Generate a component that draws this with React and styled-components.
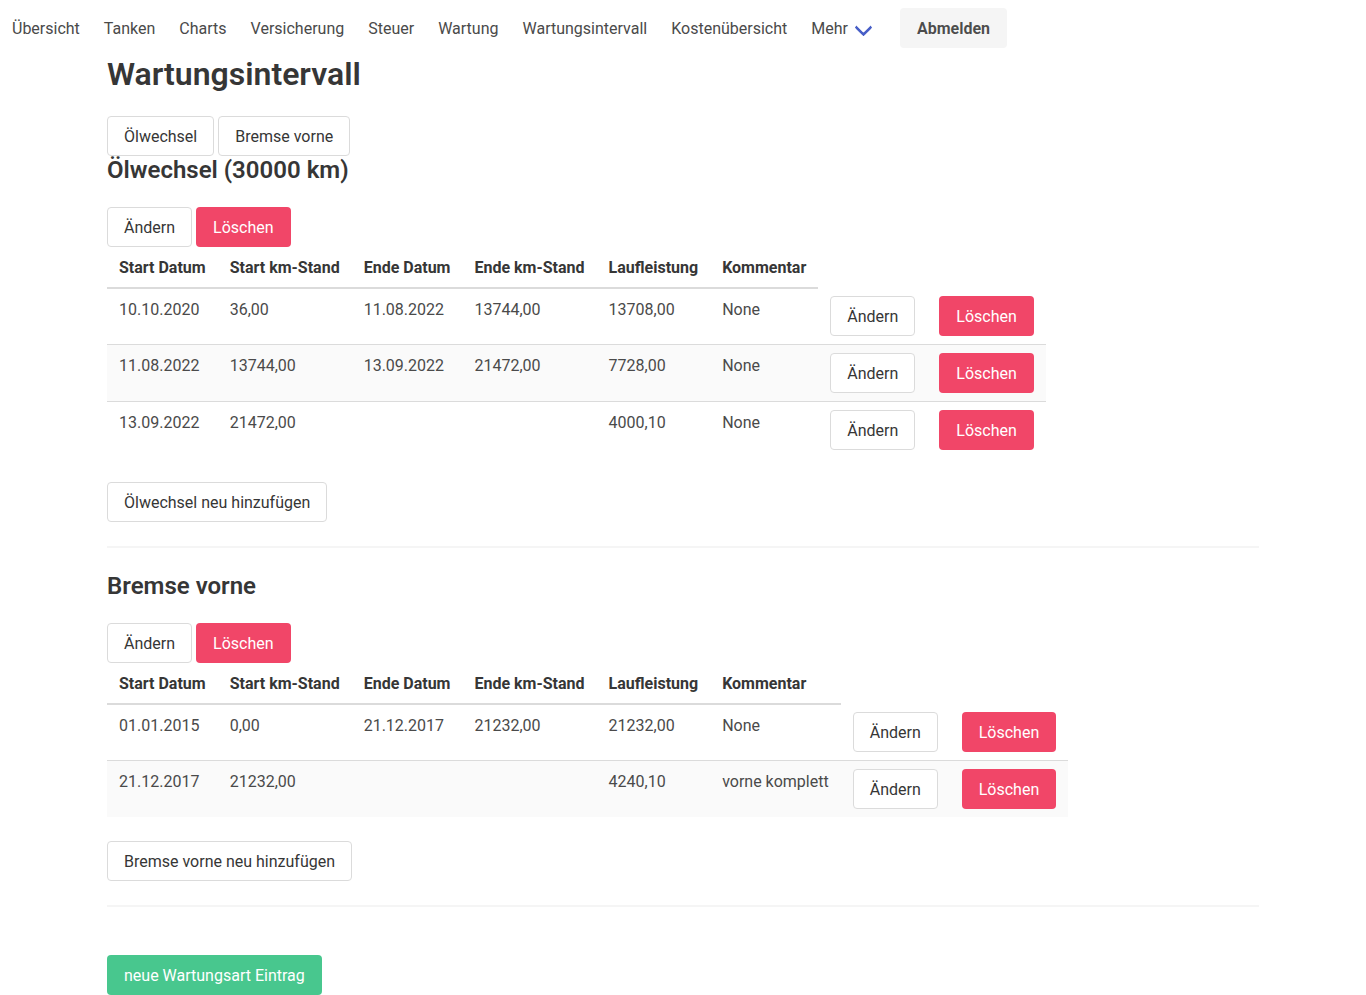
import * as React from 'react';
import styled, { createGlobalStyle, css } from 'styled-components';

const GlobalStyle = createGlobalStyle`
  html, body {
    margin: 0;
    padding: 0;
    background: #fff;
  }
  body {
    font-family: Roboto, "Liberation Sans", sans-serif;
    font-size: 16px;
    line-height: 1.5;
    color: #4a4a4a;
  }
  * {
    box-sizing: border-box;
  }
`;

const Navbar = styled.nav`
  display: flex;
  align-items: stretch;
  min-height: 56px;
  background: #fff;
`;
const NavItem = styled.a`
  display: flex;
  align-items: center;
  padding: 9px 12px 7px;
  color: #4a4a4a;
  text-decoration: none;
  cursor: pointer;
`;
// chevron like bulma's navbar-link arrow
const NavDropdown = styled(NavItem)`
  position: relative;
  padding-right: 40px;
  &::after {
    content: '';
    position: absolute;
    right: 18px;
    top: 50%;
    margin-top: -7px;
    width: 10px;
    height: 10px;
    border: 3px solid #485fc7;
    border-radius: 2px;
    border-right: 0;
    border-top: 0;
    transform: rotate(-45deg);
    transform-origin: center;
  }
`;
const NavButtons = styled.div`
  display: flex;
  align-items: center;
  padding: 8px 12px;
`;

const Container = styled.main`
  width: 1152px;
  margin: 0 auto;
`;
const Title = styled.h1`
  margin: 0 0 24px;
  font-size: 32px;
  font-weight: 600;
  line-height: 1.125;
  color: #363636;
`;
const SectionTitle = styled.h2`
  margin: 0 0 23px;
  padding-top: 1px;
  font-size: 24px;
  font-weight: 600;
  line-height: 1.125;
  color: #363636;
`;
const ButtonRow = styled.div`
  display: flex;
  gap: 4px;
`;

const variants = {
  default: css`
    background: #fff;
    border-color: #dbdbdb;
    color: #363636;
  `,
  danger: css`
    background: #f14668;
    border-color: transparent;
    color: #fff;
  `,
  success: css`
    background: #48c78e;
    border-color: transparent;
    color: #fff;
  `,
  light: css`
    background: #f5f5f5;
    border-color: transparent;
    color: rgba(0, 0, 0, 0.7);
    font-weight: 700;
  `
};

const Button = styled.button`
  display: inline-flex;
  align-items: center;
  justify-content: center;
  height: 40px;
  padding: 8px 16px 6px;
  border: 1px solid;
  border-radius: 4px;
  font-family: inherit;
  font-size: 16px;
  line-height: 1.5;
  white-space: nowrap;
  cursor: pointer;
  ${props => variants[props.$variant || 'default']}
`;

const Table = styled.table`
  border-collapse: collapse;
  border-spacing: 0;
  margin-bottom: 24px;
  background: #fff;
  color: #363636;
`;
const Th = styled.th`
  padding: 9px 12px 7px;
  border-bottom: 2px solid #dbdbdb;
  text-align: left;
  vertical-align: top;
  font-weight: 700;
  color: #363636;
  white-space: nowrap;
`;
const Row = styled.tr`
  &:nth-child(even) {
    background: #fafafa;
  }
  &:last-child td {
    border-bottom: 0;
  }
`;
const Td = styled.td`
  padding: 9px 12px 7px;
  border-bottom: 1px solid #dbdbdb;
  vertical-align: top;
  color: #4a4a4a;
  white-space: nowrap;
`;
const ActionTd = styled(Td)`
  padding: 8px 12px;
`;
const Divider = styled.hr`
  height: 2px;
  margin: 24px 0;
  border: none;
  background: #f5f5f5;
`;
const Footer = styled.div`
  padding-top: 24px;
`;

const columns = ['Start Datum', 'Start km-Stand', 'Ende Datum', 'Ende km-Stand', 'Laufleistung', 'Kommentar'];

const intervals = [
  {
    name: 'Ölwechsel',
    title: 'Ölwechsel (30000 km)',
    rows: [
      ['10.10.2020', '36,00', '11.08.2022', '13744,00', '13708,00', 'None'],
      ['11.08.2022', '13744,00', '13.09.2022', '21472,00', '7728,00', 'None'],
      ['13.09.2022', '21472,00', '', '', '4000,10', 'None']
    ]
  },
  {
    name: 'Bremse vorne',
    title: 'Bremse vorne',
    rows: [
      ['01.01.2015', '0,00', '21.12.2017', '21232,00', '21232,00', 'None'],
      ['21.12.2017', '21232,00', '', '', '4240,10', 'vorne komplett']
    ]
  }
];

const navLinks = ['Übersicht', 'Tanken', 'Charts', 'Versicherung', 'Steuer', 'Wartung', 'Wartungsintervall', 'Kostenübersicht'];

function IntervalSection({ interval }) {
  return (
    <section>
      <SectionTitle>{interval.title}</SectionTitle>
      <ButtonRow>
        <Button>Ändern</Button>
        <Button $variant="danger">Löschen</Button>
      </ButtonRow>
      <Table>
        <thead>
          <tr>
            {columns.map(col => (
              <Th key={col}>{col}</Th>
            ))}
          </tr>
        </thead>
        <tbody>
          {interval.rows.map((row, i) => (
            <Row key={i}>
              {row.map((cell, j) => (
                <Td key={j}>{cell}</Td>
              ))}
              <ActionTd>
                <Button>Ändern</Button>
              </ActionTd>
              <ActionTd>
                <Button $variant="danger">Löschen</Button>
              </ActionTd>
            </Row>
          ))}
        </tbody>
      </Table>
      <Button>{interval.name} neu hinzufügen</Button>
      <Divider />
    </section>
  );
}

export default function App() {
  return (
    <>
      <GlobalStyle />
      <Navbar>
        {navLinks.map(link => (
          <NavItem key={link}>{link}</NavItem>
        ))}
        <NavDropdown>Mehr</NavDropdown>
        <NavButtons>
          <Button $variant="light">Abmelden</Button>
        </NavButtons>
      </Navbar>
      <Container>
        <Title>Wartungsintervall</Title>
        <ButtonRow>
          {intervals.map(iv => (
            <Button key={iv.name}>{iv.name}</Button>
          ))}
        </ButtonRow>
        {intervals.map(iv => (
          <IntervalSection key={iv.name} interval={iv} />
        ))}
        <Footer>
          <Button $variant="success">neue Wartungsart Eintrag</Button>
        </Footer>
      </Container>
    </>
  );
}
